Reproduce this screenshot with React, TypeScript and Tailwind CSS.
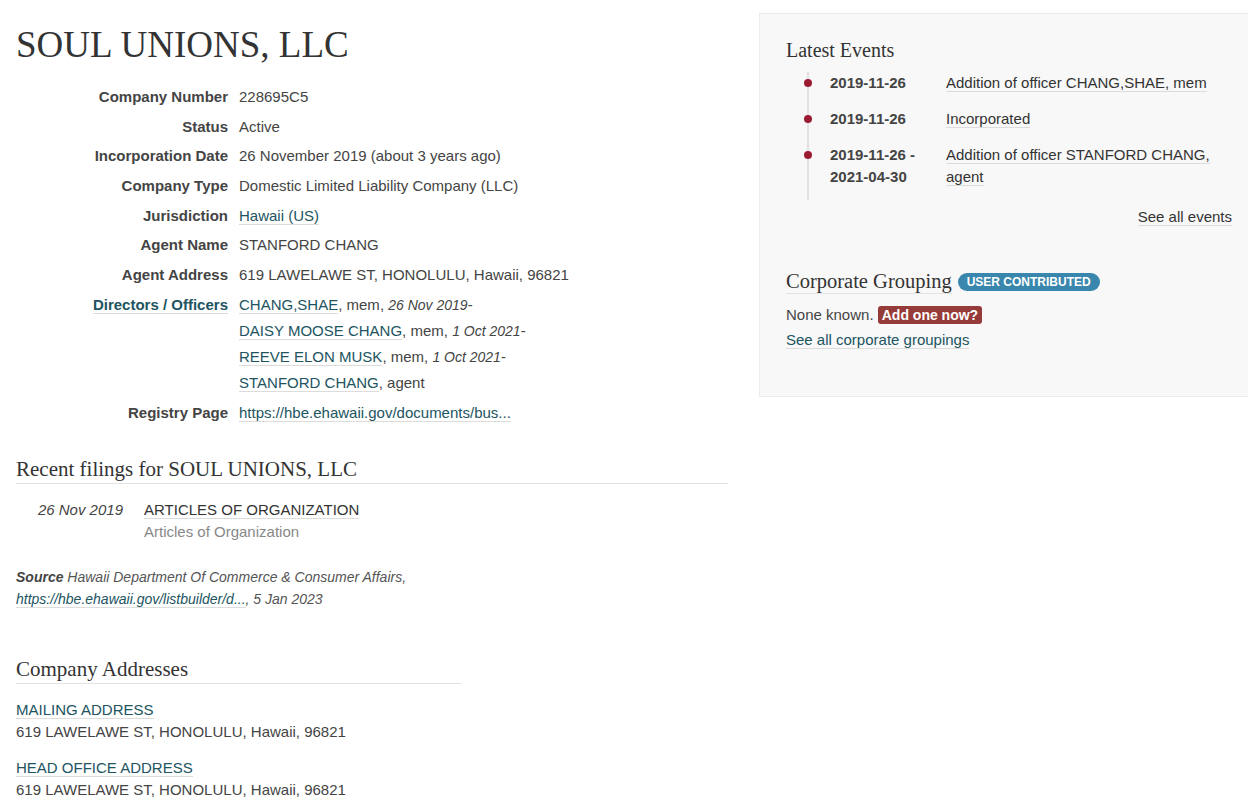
import React from 'react';

// ─── Data ─────────────────────────────────────────────────────────────────────

const serif = "font-['Liberation_Serif',serif]";
const link = 'text-[#215461] border-b border-[#dcdcdc]';

interface Officer {
  name: string;
  role: string;
  since?: string;
}

const officers: Officer[] = [
  { name: 'CHANG,SHAE', role: 'mem', since: '26 Nov 2019' },
  { name: 'DAISY MOOSE CHANG', role: 'mem', since: '1 Oct 2021' },
  { name: 'REEVE ELON MUSK', role: 'mem', since: '1 Oct 2021' },
  { name: 'STANFORD CHANG', role: 'agent' },
];

const events = [
  { date: ['2019-11-26'], text: 'Addition of officer CHANG,SHAE, mem' },
  { date: ['2019-11-26'], text: 'Incorporated' },
  { date: ['2019-11-26 -', '2021-04-30'], text: 'Addition of officer STANFORD CHANG, agent' },
];

// ─── Page ─────────────────────────────────────────────────────────────────────

export default function App() {
  return (
    <div className="min-h-screen bg-white font-['Liberation_Sans',Arial,sans-serif] text-[15px] text-[#444] overflow-hidden">
      <div className="flex items-start">
        {/* Main column */}
        <div className="ml-4 w-[712px] shrink-0">
          <h1 className={`${serif} pt-[24px] text-[37px] leading-[41px] text-[#333] font-normal`}>
            SOUL UNIONS, LLC
          </h1>

          <dl className="mt-[19px] grid grid-cols-[212px_1fr] gap-x-[11px] gap-y-[3.7px] leading-[26px]">
            <Row label="Company Number">228695C5</Row>
            <Row label="Status">Active</Row>
            <Row label="Incorporation Date">26 November 2019 (about 3 years ago)</Row>
            <Row label="Company Type">Domestic Limited Liability Company (LLC)</Row>
            <Row label="Jurisdiction">
              <a className={link}>Hawaii (US)</a>
            </Row>
            <Row label="Agent Name">STANFORD CHANG</Row>
            <Row label="Agent Address">619 LAWELAWE ST, HONOLULU, Hawaii, 96821</Row>
            <dt className="text-right font-bold">
              <a className="text-[#215461] border-b border-[#dcdcdc]">Directors / Officers</a>
            </dt>
            <dd>
              {officers.map((o) => (
                <div key={o.name}>
                  <a className={link}>{o.name}</a>, {o.role}
                  {o.since && (
                    <>
                      , <span className="italic text-[14px]">{o.since}</span>-
                    </>
                  )}
                </div>
              ))}
            </dd>
            <Row label="Registry Page">
              <a className={link}>https://hbe.ehawaii.gov/documents/bus...</a>
            </Row>
          </dl>

          {/* Recent filings */}
          <h2 className={`${serif} mt-[30px] text-[21px] leading-[26px] pb-[1px] text-[#333] font-normal border-b border-[#e3e3e3]`}>
            Recent filings for SOUL UNIONS, LLC
          </h2>
          <div className="mt-[15px] flex leading-[22px]">
            <div className="w-[107px] shrink-0 text-right italic text-[#444]">26 Nov 2019</div>
            <div className="ml-[21px]">
              <a className="text-[#333] border-b border-[#dcdcdc]">ARTICLES OF ORGANIZATION</a>
              <div className="text-[#888]">Articles of Organization</div>
            </div>
          </div>

          <p className="mt-[23px] text-[14px] leading-[22px] italic text-[#555]">
            <b className="text-[#444]">Source</b> Hawaii Department Of Commerce &amp; Consumer Affairs,
            <br />
            <a className={link}>https://hbe.ehawaii.gov/listbuilder/d...</a>, 5 Jan 2023
          </p>

          {/* Addresses */}
          <h2 className={`${serif} mt-[46px] w-[445px] text-[21px] leading-[26px] pb-[1px] text-[#333] font-normal border-b border-[#e3e3e3]`}>
            Company Addresses
          </h2>
          <div className="mt-[15px] leading-[22px]">
            <a className={link}>MAILING ADDRESS</a>
            <div>619 LAWELAWE ST, HONOLULU, Hawaii, 96821</div>
          </div>
          <div className="mt-[14px] leading-[22px]">
            <a className={link}>HEAD OFFICE ADDRESS</a>
            <div>619 LAWELAWE ST, HONOLULU, Hawaii, 96821</div>
          </div>
        </div>

        {/* Sidebar */}
        <aside className="ml-[31px] mt-[13px] h-[384px] flex-1 bg-[#f8f8f8] border border-[#ececec] border-r-0 pl-[26px] pr-[16px] pt-[23px]">
          <h3 className={`${serif} text-[20px] leading-[26px] text-[#333] font-normal`}>Latest Events</h3>
          <ul className="relative mt-[9px] pb-[12px] leading-[22px]">
            <span className="absolute left-[21px] top-0 bottom-0 w-[2px] bg-[#e2e2e2]" />
            {events.map((e, i) => (
              <li key={i} className="relative flex pb-[14px] last:pb-0">
                <span className="absolute left-[18px] top-[7px] w-[8px] h-[8px] rounded-full bg-[#9b1b30]" />
                <div className="ml-[44px] w-[116px] shrink-0 font-bold">
                  {e.date.map((d) => (
                    <div key={d}>{d}</div>
                  ))}
                </div>
                <div className="w-[270px]">
                  <a className="text-[#333] border-b border-[#dcdcdc]">{e.text}</a>
                </div>
              </li>
            ))}
          </ul>
          <div className="mt-[6px] text-right leading-[22px]">
            <a className="text-[#333] border-b border-[#dcdcdc]">See all events</a>
          </div>

          <div className="mt-[41px] flex items-center leading-[26px]">
            <h3 className={`${serif} text-[20.5px] text-[#333] font-normal border-b border-[#e3e3e3] leading-[24px]`}>
              Corporate Grouping
            </h3>
            <span className="ml-[6px] h-[18px] px-[9px] rounded-full bg-[#3a87ad] text-white text-[12px] font-bold leading-[18px]">
              USER CONTRIBUTED
            </span>
          </div>
          <div className="mt-[10px] leading-[22px]">
            None known.{' '}
            <span className="inline-block h-[18px] px-[4px] rounded-[3px] bg-[#953b39] text-white text-[14px] font-bold leading-[18px]">
              Add one now?
            </span>
          </div>
          <div className="mt-[3px] leading-[22px]">
            <a className={link}>See all corporate groupings</a>
          </div>
        </aside>
      </div>
    </div>
  );
}

// ─── Small helpers ────────────────────────────────────────────────────────────

function Row({ label, children }: { label: string; children: React.ReactNode }) {
  return (
    <>
      <dt className="text-right font-bold">{label}</dt>
      <dd>{children}</dd>
    </>
  );
}
